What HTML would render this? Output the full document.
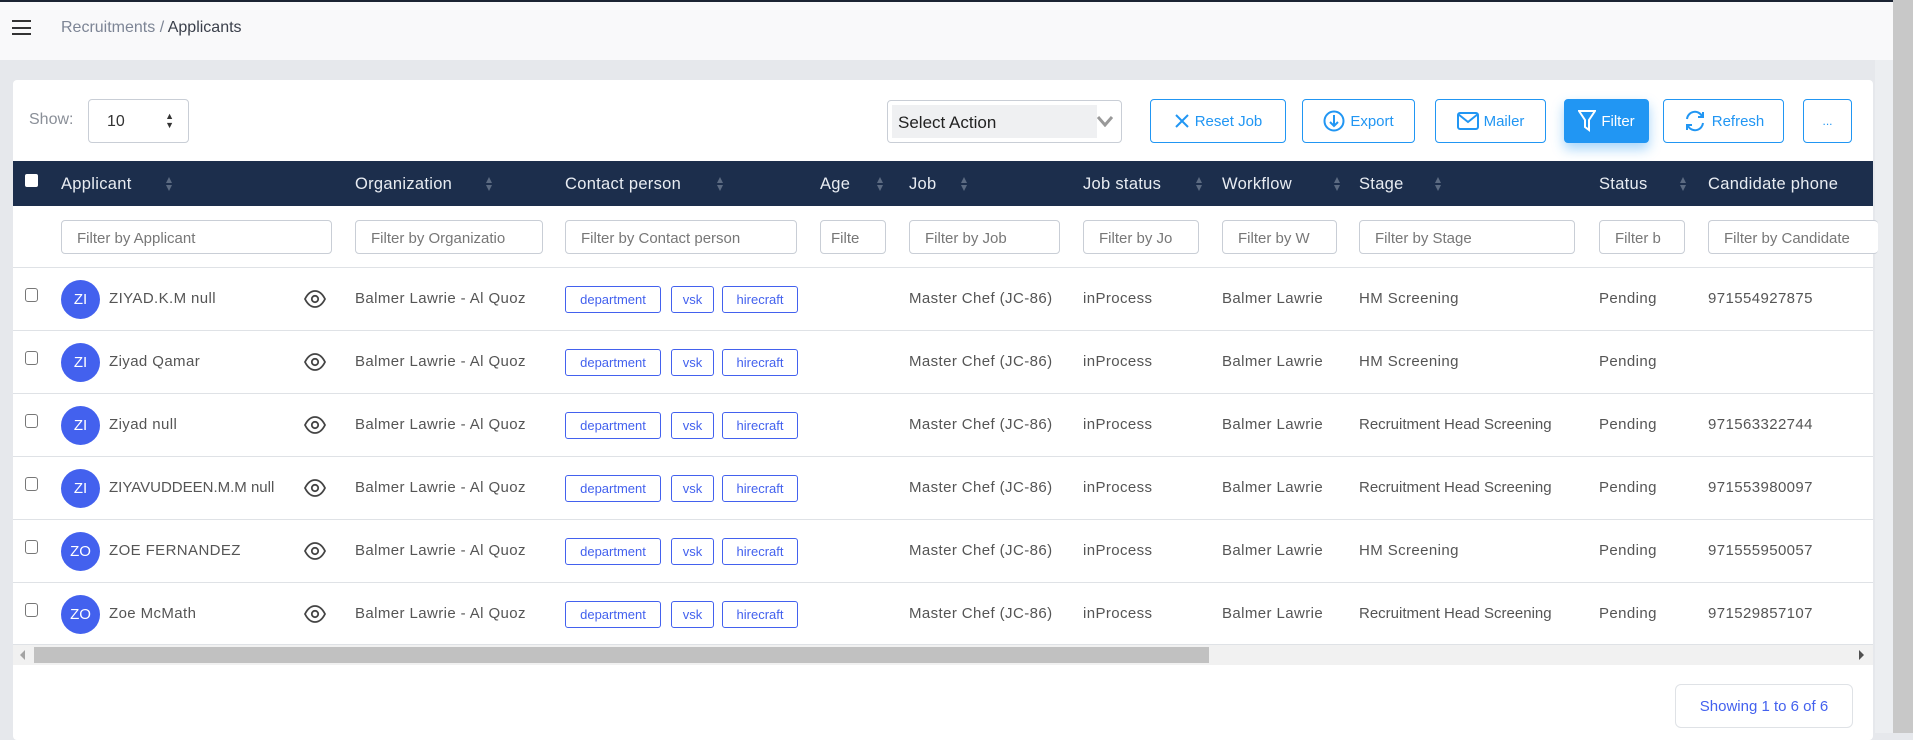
<!DOCTYPE html>
<html><head><meta charset="utf-8"><style>
*{box-sizing:border-box;margin:0;padding:0}
body{width:1913px;height:733px;overflow:hidden;background:#e6e8ec;font-family:"Liberation Sans",sans-serif;position:relative;color:#555}
.abs{position:absolute}
.top{left:0;top:0;width:1893px;height:60px;background:#f9f9fa;border-top:2px solid #1c2433}
.sb{left:1893px;top:0;width:20px;height:733px;background:#c8c8c8}
.sbt{left:1875px;top:60px;width:18px;height:673px;background:#eceef1}
.card{left:13px;top:80px;width:1860px;height:660px;background:#fff;border-radius:4px}
.btn{position:absolute;top:99px;height:44px;border:1px solid #2196f3;border-radius:4px;color:#2196f3;font-size:15px;display:flex;align-items:center;justify-content:center;gap:5px;background:#fff}
.hd{left:13px;top:161px;width:1860px;height:45px;background:#1c2e4c}
.ht{position:absolute;top:175px;color:#e8ecf2;font-size:16.5px;letter-spacing:.3px}
.sort{position:absolute;top:176px;width:8px;height:16px}
.inp{position:absolute;top:220px;height:34px;border:1px solid #c9ced6;border-radius:4px;font-size:15px;color:#777;padding:9px 0 0 15px;overflow:hidden;white-space:nowrap;background:#fff}
.row{position:absolute;left:13px;width:1860px;height:63px;border-top:1px solid #dfe2e6;background:#fff}
.c{position:absolute;top:22px;font-size:15px;color:#555;letter-spacing:.4px;white-space:nowrap}
.av{position:absolute;left:48px;top:12px;width:39px;height:39px;border-radius:50%;background:#4361ee;color:#fff;font-size:15px;display:flex;align-items:center;justify-content:center}
.cb{position:absolute;left:12px;top:20px;width:13px;height:14px;border:1px solid #777;border-radius:3px}
.tag{position:absolute;top:18px;height:27px;border:1px solid #4361ee;border-radius:3px;color:#4361ee;font-size:13px;display:flex;align-items:center;justify-content:center}
</style></head><body>
<div class="abs top"></div>
<div class="abs" style="left:12px;top:20px;width:19px;height:15px;border-top:2px solid #333;border-bottom:2px solid #333"><div style="margin-top:4.5px;height:2px;background:#333"></div></div>
<div class="abs" style="left:61px;top:19px;font-size:16px;color:#7d8595">Recruitments <span style="color:#7d8595">/</span> <span style="color:#3a3f4a">Applicants</span></div>
<div class="abs sbt"></div><div class="abs sb"></div>
<div class="abs card"></div>
<div class="abs" style="left:29px;top:111px;font-size:16px;color:#8a8f98">Show:</div>
<div class="abs" style="left:88px;top:99px;width:101px;height:44px;border:1px solid #c9ced6;border-radius:4px;font-size:16px;color:#333;padding:13px 0 0 18px">10<span style="position:absolute;right:14px;top:12px;font-size:9px;line-height:9px">▲<br>▼</span></div>
<div class="abs" style="left:887px;top:100px;width:235px;height:43px;border:1px solid #c9ced6;border-radius:4px;background:#fff"><div style="position:absolute;left:4px;top:4px;width:205px;height:33px;background:#eff0f2;font-size:17px;color:#222;padding:8px 0 0 6px">Select Action</div><svg style="position:absolute;right:8px;top:14px" width="16" height="12" viewBox="0 0 16 12"><path d="M1 2l7 8 7-8" stroke="#999" stroke-width="3" fill="none"/></svg></div>
<div class="btn" style="left:1150px;width:136px"><svg width="16" height="16" viewBox="0 0 16 16"><path d="M2 2l12 12M14 2L2 14" stroke="#2196f3" stroke-width="2"/></svg>Reset Job</div>
<div class="btn" style="left:1302px;width:113px"><svg width="22" height="22" viewBox="0 0 22 22"><circle cx="11" cy="11" r="9.5" stroke="#2196f3" stroke-width="2" fill="none"/><path d="M11 5v11M7 12l4 4 4-4" stroke="#2196f3" stroke-width="2" fill="none"/></svg>Export</div>
<div class="btn" style="left:1435px;width:111px"><svg width="22" height="18" viewBox="0 0 22 18"><rect x="1" y="1" width="20" height="16" rx="2" stroke="#2196f3" stroke-width="2" fill="none"/><path d="M1 2l10 8 10-8" stroke="#2196f3" stroke-width="2" fill="none"/></svg>Mailer</div>
<div class="btn" style="left:1564px;width:85px;background:#2196f3;color:#fff;box-shadow:0 6px 12px rgba(33,150,243,.4)"><svg width="18" height="22" viewBox="0 0 18 22"><path d="M1 1h16l-6 9v10l-4-3v-7z" stroke="#fff" stroke-width="2" fill="none"/></svg>Filter</div>
<div class="btn" style="left:1663px;width:121px"><svg width="24" height="22" viewBox="0 0 24 22"><path d="M4 9a8 8 0 0 1 15-3M20 13a8 8 0 0 1-15 3" stroke="#2196f3" stroke-width="2" fill="none"/><path d="M20 2v5h-5M4 20v-5h5" stroke="#2196f3" stroke-width="2" fill="none"/></svg>Refresh</div>
<div class="btn" style="left:1803px;width:49px;font-size:12px">...</div>
<div class="abs hd"></div>
<div class="abs" style="left:25px;top:174px;width:13px;height:13px;background:#fff;border-radius:2px"></div>
<div class="ht" style="left:61px">Applicant</div><svg class="sort" style="left:165px" viewBox="0 0 8 16"><path d="M4 1l3 6H1zM4 15l3-6H1z" fill="#5c6b82"/></svg>
<div class="ht" style="left:355px">Organization</div><svg class="sort" style="left:485px" viewBox="0 0 8 16"><path d="M4 1l3 6H1zM4 15l3-6H1z" fill="#5c6b82"/></svg>
<div class="ht" style="left:565px">Contact person</div><svg class="sort" style="left:716px" viewBox="0 0 8 16"><path d="M4 1l3 6H1zM4 15l3-6H1z" fill="#5c6b82"/></svg>
<div class="ht" style="left:820px">Age</div><svg class="sort" style="left:876px" viewBox="0 0 8 16"><path d="M4 1l3 6H1zM4 15l3-6H1z" fill="#5c6b82"/></svg>
<div class="ht" style="left:909px">Job</div><svg class="sort" style="left:960px" viewBox="0 0 8 16"><path d="M4 1l3 6H1zM4 15l3-6H1z" fill="#5c6b82"/></svg>
<div class="ht" style="left:1083px">Job status</div><svg class="sort" style="left:1195px" viewBox="0 0 8 16"><path d="M4 1l3 6H1zM4 15l3-6H1z" fill="#5c6b82"/></svg>
<div class="ht" style="left:1222px">Workflow</div><svg class="sort" style="left:1333px" viewBox="0 0 8 16"><path d="M4 1l3 6H1zM4 15l3-6H1z" fill="#5c6b82"/></svg>
<div class="ht" style="left:1359px">Stage</div><svg class="sort" style="left:1434px" viewBox="0 0 8 16"><path d="M4 1l3 6H1zM4 15l3-6H1z" fill="#5c6b82"/></svg>
<div class="ht" style="left:1599px">Status</div><svg class="sort" style="left:1679px" viewBox="0 0 8 16"><path d="M4 1l3 6H1zM4 15l3-6H1z" fill="#5c6b82"/></svg>
<div class="ht" style="left:1708px">Candidate phone</div>
<div class="inp" style="left:61px;width:271px">Filter by Applicant</div>
<div class="inp" style="left:355px;width:188px">Filter by Organizatio</div>
<div class="inp" style="left:565px;width:232px">Filter by Contact person</div>
<div class="inp" style="left:820px;width:66px;padding-left:10px">Filte</div>
<div class="inp" style="left:909px;width:151px">Filter by Job</div>
<div class="inp" style="left:1083px;width:116px">Filter by Jo</div>
<div class="inp" style="left:1222px;width:115px">Filter by W</div>
<div class="inp" style="left:1359px;width:216px">Filter by Stage</div>
<div class="inp" style="left:1599px;width:86px">Filter b</div>
<div class="inp" style="left:1708px;width:170px;border-right:none">Filter by Candidate</div>
<div id="rows"></div>
<script></script>
<div class="row" style="top:267px"><div class="cb"></div><div class="av">ZI</div><div class="c" style="left:96px">ZIYAD.K.M null</div><svg class="abs" style="left:291px;top:22px" width="22" height="18" viewBox="0 0 22 18"><path d="M1 9C4 3 8 1 11 1s7 2 10 8c-3 6-7 8-10 8S4 15 1 9z" stroke="#444" stroke-width="1.8" fill="none"/><circle cx="11" cy="9" r="3.2" stroke="#444" stroke-width="1.8" fill="none"/></svg><div class="c" style="left:342px">Balmer Lawrie - Al Quoz</div><div class="tag" style="left:552px;width:96px">department</div><div class="tag" style="left:658px;width:43px">vsk</div><div class="tag" style="left:709px;width:76px">hirecraft</div><div class="c" style="left:896px">Master Chef (JC-86)</div><div class="c" style="left:1070px">inProcess</div><div class="c" style="left:1209px">Balmer Lawrie</div><div class="c" style="left:1346px">HM Screening</div><div class="c" style="left:1586px">Pending</div><div class="c" style="left:1695px">971554927875</div></div>
<div class="row" style="top:330px"><div class="cb"></div><div class="av">ZI</div><div class="c" style="left:96px">Ziyad Qamar</div><svg class="abs" style="left:291px;top:22px" width="22" height="18" viewBox="0 0 22 18"><path d="M1 9C4 3 8 1 11 1s7 2 10 8c-3 6-7 8-10 8S4 15 1 9z" stroke="#444" stroke-width="1.8" fill="none"/><circle cx="11" cy="9" r="3.2" stroke="#444" stroke-width="1.8" fill="none"/></svg><div class="c" style="left:342px">Balmer Lawrie - Al Quoz</div><div class="tag" style="left:552px;width:96px">department</div><div class="tag" style="left:658px;width:43px">vsk</div><div class="tag" style="left:709px;width:76px">hirecraft</div><div class="c" style="left:896px">Master Chef (JC-86)</div><div class="c" style="left:1070px">inProcess</div><div class="c" style="left:1209px">Balmer Lawrie</div><div class="c" style="left:1346px">HM Screening</div><div class="c" style="left:1586px">Pending</div></div>
<div class="row" style="top:393px"><div class="cb"></div><div class="av">ZI</div><div class="c" style="left:96px">Ziyad null</div><svg class="abs" style="left:291px;top:22px" width="22" height="18" viewBox="0 0 22 18"><path d="M1 9C4 3 8 1 11 1s7 2 10 8c-3 6-7 8-10 8S4 15 1 9z" stroke="#444" stroke-width="1.8" fill="none"/><circle cx="11" cy="9" r="3.2" stroke="#444" stroke-width="1.8" fill="none"/></svg><div class="c" style="left:342px">Balmer Lawrie - Al Quoz</div><div class="tag" style="left:552px;width:96px">department</div><div class="tag" style="left:658px;width:43px">vsk</div><div class="tag" style="left:709px;width:76px">hirecraft</div><div class="c" style="left:896px">Master Chef (JC-86)</div><div class="c" style="left:1070px">inProcess</div><div class="c" style="left:1209px">Balmer Lawrie</div><div class="c" style="left:1346px;letter-spacing:0">Recruitment Head Screening</div><div class="c" style="left:1586px">Pending</div><div class="c" style="left:1695px">971563322744</div></div>
<div class="row" style="top:456px"><div class="cb"></div><div class="av">ZI</div><div class="c" style="left:96px;letter-spacing:0">ZIYAVUDDEEN.M.M null</div><svg class="abs" style="left:291px;top:22px" width="22" height="18" viewBox="0 0 22 18"><path d="M1 9C4 3 8 1 11 1s7 2 10 8c-3 6-7 8-10 8S4 15 1 9z" stroke="#444" stroke-width="1.8" fill="none"/><circle cx="11" cy="9" r="3.2" stroke="#444" stroke-width="1.8" fill="none"/></svg><div class="c" style="left:342px">Balmer Lawrie - Al Quoz</div><div class="tag" style="left:552px;width:96px">department</div><div class="tag" style="left:658px;width:43px">vsk</div><div class="tag" style="left:709px;width:76px">hirecraft</div><div class="c" style="left:896px">Master Chef (JC-86)</div><div class="c" style="left:1070px">inProcess</div><div class="c" style="left:1209px">Balmer Lawrie</div><div class="c" style="left:1346px;letter-spacing:0">Recruitment Head Screening</div><div class="c" style="left:1586px">Pending</div><div class="c" style="left:1695px">971553980097</div></div>
<div class="row" style="top:519px"><div class="cb"></div><div class="av">ZO</div><div class="c" style="left:96px">ZOE FERNANDEZ</div><svg class="abs" style="left:291px;top:22px" width="22" height="18" viewBox="0 0 22 18"><path d="M1 9C4 3 8 1 11 1s7 2 10 8c-3 6-7 8-10 8S4 15 1 9z" stroke="#444" stroke-width="1.8" fill="none"/><circle cx="11" cy="9" r="3.2" stroke="#444" stroke-width="1.8" fill="none"/></svg><div class="c" style="left:342px">Balmer Lawrie - Al Quoz</div><div class="tag" style="left:552px;width:96px">department</div><div class="tag" style="left:658px;width:43px">vsk</div><div class="tag" style="left:709px;width:76px">hirecraft</div><div class="c" style="left:896px">Master Chef (JC-86)</div><div class="c" style="left:1070px">inProcess</div><div class="c" style="left:1209px">Balmer Lawrie</div><div class="c" style="left:1346px">HM Screening</div><div class="c" style="left:1586px">Pending</div><div class="c" style="left:1695px">971555950057</div></div>
<div class="row" style="top:582px;border-bottom:1px solid #dfe2e6"><div class="cb"></div><div class="av">ZO</div><div class="c" style="left:96px">Zoe McMath</div><svg class="abs" style="left:291px;top:22px" width="22" height="18" viewBox="0 0 22 18"><path d="M1 9C4 3 8 1 11 1s7 2 10 8c-3 6-7 8-10 8S4 15 1 9z" stroke="#444" stroke-width="1.8" fill="none"/><circle cx="11" cy="9" r="3.2" stroke="#444" stroke-width="1.8" fill="none"/></svg><div class="c" style="left:342px">Balmer Lawrie - Al Quoz</div><div class="tag" style="left:552px;width:96px">department</div><div class="tag" style="left:658px;width:43px">vsk</div><div class="tag" style="left:709px;width:76px">hirecraft</div><div class="c" style="left:896px">Master Chef (JC-86)</div><div class="c" style="left:1070px">inProcess</div><div class="c" style="left:1209px">Balmer Lawrie</div><div class="c" style="left:1346px;letter-spacing:0">Recruitment Head Screening</div><div class="c" style="left:1586px">Pending</div><div class="c" style="left:1695px">971529857107</div></div>
<div class="abs" style="left:13px;top:645px;width:1860px;height:20px;background:#f1f1f1"></div>
<div class="abs" style="left:34px;top:647px;width:1175px;height:16px;background:#c1c1c1"></div>
<div class="abs" style="left:20px;top:650px;width:0;height:0;border:5px solid transparent;border-right-color:#a3a3a3;border-left:0"></div>
<div class="abs" style="left:1859px;top:650px;width:0;height:0;border:5px solid transparent;border-left-color:#505050;border-right:0"></div>
<div class="abs" style="left:1675px;top:684px;width:178px;height:44px;border:1px solid #dfe2e6;border-radius:6px;color:#4361ee;font-size:15px;padding-top:13px;text-align:center">Showing 1 to 6 of 6</div>
</body></html>
